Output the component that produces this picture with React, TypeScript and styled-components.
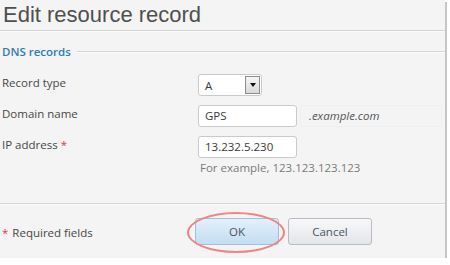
import * as React from "react";
import styled, { createGlobalStyle } from "styled-components";

const GlobalStyle = createGlobalStyle`
  html, body {
    margin: 0;
    padding: 0;
    background: #ffffff;
  }
  body {
    font-family: "Open Sans", "DejaVu Sans", sans-serif;
  }
`;

const Panel = styled.div`
  width: 443px;
  height: 258px;
  padding-left: 2px;
  background: #f4f4f4;
  box-shadow: 2px 2px 0 #c6c6c6;
  color: #474747;
  font-size: 11.5px;
  overflow: hidden;
`;

const Title = styled.h1`
  margin: 0 0 0 -2px;
  height: 30px;
  padding-left: 3px;
  font-family: "Liberation Sans", Arial, sans-serif;
  font-weight: normal;
  font-size: 22px;
  line-height: 29px;
  color: #4f4f4f;
  border-bottom: 1px solid #d2d2d2;
  box-shadow: 0 1px 0 #fbfbfb;
`;

const Legend = styled.div`
  display: flex;
  align-items: center;
  gap: 6px;
  height: 20px;
  margin-top: 10px;
  font-weight: 600;
  font-size: 11.5px;
  color: #2f7db3;
`;

const LegendLine = styled.span`
  flex: 1;
  height: 1px;
  background: #d6d6d6;
  box-shadow: 0 1px 0 #fbfbfb;
`;

const Fields = styled.div`
  display: grid;
  grid-template-columns: 196px 1fr;
  row-gap: 9px;
  margin-top: 13px;
  align-items: start;
`;

const Label = styled.div`
  height: 22px;
  line-height: 17px;
  color: #474747;
`;

const Required = styled.span`
  color: #d9364f;
  margin-left: 3px;
`;

const FieldCell = styled.div`
  display: flex;
  align-items: center;
  gap: 3px;
`;

const Input = styled.div`
  box-sizing: border-box;
  width: 99px;
  height: 22px;
  padding-left: 6px;
  line-height: 20px;
  background: #ffffff;
  border: 1px solid #cacaca;
  border-radius: 3px;
  color: #3a3a3a;
`;

const Select = styled.div`
  box-sizing: border-box;
  display: flex;
  align-items: center;
  justify-content: space-between;
  width: 64px;
  height: 22px;
  padding: 0 1px 0 6px;
  background: #ffffff;
  border: 1px solid #cacaca;
  border-radius: 3px;
  color: #3a3a3a;
`;

const SelectArrow = styled.span`
  box-sizing: border-box;
  display: flex;
  align-items: center;
  justify-content: center;
  width: 15px;
  height: 18px;
  border: 1px solid #8c8c8c;
  background: linear-gradient(#f6f6f6, #d9d9d9);

  &::after {
    content: "";
    border-left: 3.5px solid transparent;
    border-right: 3.5px solid transparent;
    border-top: 4px solid #111;
  }
`;

const Suffix = styled.div`
  box-sizing: border-box;
  width: 142px;
  height: 22px;
  padding-left: 8px;
  line-height: 20px;
  font-style: italic;
  color: #555555;
  background: #f4f4f4;
  border: 1px solid #efefef;
  border-radius: 3px;
`;

const Stack = styled.div`
  display: flex;
  flex-direction: column;
  gap: 3px;
`;

const Hint = styled.div`
  padding-left: 2px;
  line-height: 14px;
  color: #7a7a7a;
`;

const Footer = styled.div`
  display: grid;
  grid-template-columns: 184px auto auto 1fr;
  align-items: center;
  column-gap: 9px;
  height: 55px;
  margin-top: 28px;
  margin-left: -2px;
  padding-left: 2px;
  border-top: 1px solid #d6d6d6;
  box-shadow: inset 0 1px 0 #fbfbfb;
`;

const FooterNote = styled.div`
  color: #474747;
  padding-top: 2px;
`;

const Star = styled.span`
  color: #d9364f;
  margin-right: 4px;
`;

const Button = styled.div<{ $primary?: boolean }>`
  position: relative;
  box-sizing: border-box;
  width: 84px;
  height: 27px;
  line-height: 25px;
  text-align: center;
  border-radius: 3px;
  color: #4a5560;
  border: 1px solid ${(p) => (p.$primary ? "#9cc0dd" : "#b8bdc4")};
  background: ${(p) =>
    p.$primary
      ? "linear-gradient(#e3f0fb, #c3ddf2)"
      : "linear-gradient(#f8f8f9, #e3e6ea)"};
`;

const Highlight = styled.span`
  position: absolute;
  left: -9px;
  top: -7px;
  width: 98px;
  height: 41px;
  box-sizing: border-box;
  border: 2px solid #f08585;
  border-radius: 50%;
  pointer-events: none;
`;

export default function App() {
  return (
    <>
      <GlobalStyle />
      <Panel>
        <Title>Edit resource record</Title>
        <Legend>
          DNS records
          <LegendLine />
        </Legend>
        <Fields>
          <Label>Record type</Label>
          <FieldCell>
            <Select>
              A
              <SelectArrow />
            </Select>
          </FieldCell>
          <Label>Domain name</Label>
          <FieldCell>
            <Input>GPS</Input>
            <Suffix>.example.com</Suffix>
          </FieldCell>
          <Label>
            IP address<Required>*</Required>
          </Label>
          <Stack>
            <Input>13.232.5.230</Input>
            <Hint>For example, 123.123.123.123</Hint>
          </Stack>
        </Fields>
        <Footer>
          <FooterNote>
            <Star>*</Star>Required fields
          </FooterNote>
          <Button $primary>
            OK
            <Highlight />
          </Button>
          <Button>Cancel</Button>
        </Footer>
      </Panel>
    </>
  );
}
